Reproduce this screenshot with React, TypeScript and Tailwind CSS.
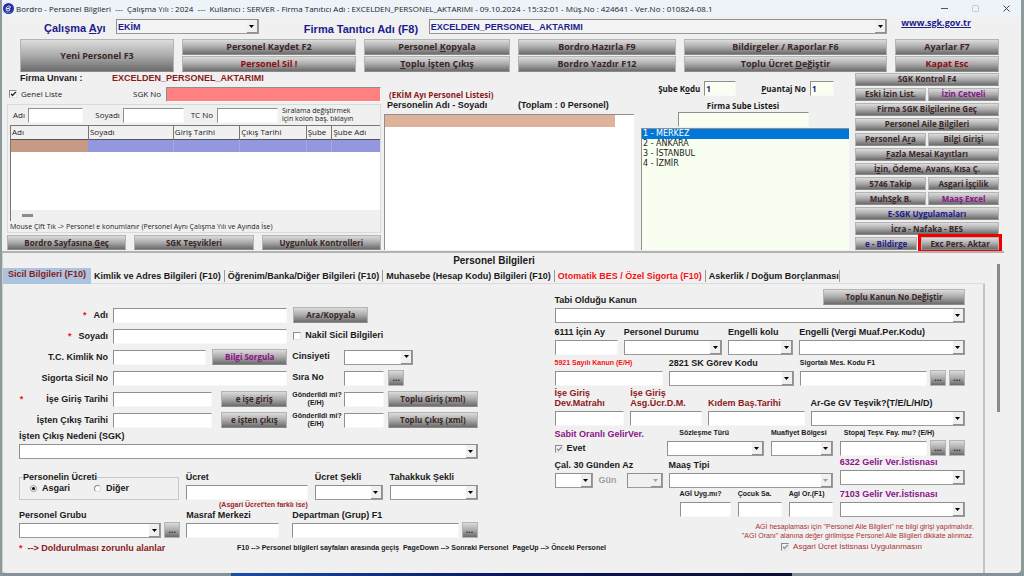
import React from 'react';
import clsx from 'clsx';

// "&" in front of a letter marks the keyboard shortcut, as in "Toplu Ücret &Değiştir"
const Mnemonic: React.FC<{ text: string }> = ({ text }) => {
    const at = text.indexOf('&');
    if (at < 0) return <span>{text}</span>;
    return (
        <span>
            {text.slice(0, at)}
            <u>{text[at + 1]}</u>
            {text.slice(at + 2)}
        </span>
    );
};

interface ButtonProps {
    text: string;
    className?: string;
}

const Button: React.FC<ButtonProps> = ({ text, className }) => (
    <button
        type="button"
        className={clsx(
            "flex min-w-0 items-center justify-center border border-[#b4b4b4] border-b-[#8a8a8a] bg-linear-to-b from-[#dcdcdc] via-[#ababab] to-[#6c6c6c] font-['Open_Sans',sans-serif] font-bold whitespace-nowrap",
            className
        )}
    >
        <Mnemonic text={text} />
    </button>
);

const MoreButton: React.FC<{ name: string }> = ({ name }) => (
    <button
        type="button"
        aria-label={name}
        className="h-4 w-4 shrink-0 border border-[#b4b4b4] bg-linear-to-b from-[#dcdcdc] via-[#ababab] to-[#6c6c6c] text-[9px] leading-[12px] font-bold text-[#3a2626]"
    >
        ...
    </button>
);

interface TextBoxProps extends React.InputHTMLAttributes<HTMLInputElement> {
    bg?: string;
}

const TextBox: React.FC<TextBoxProps> = ({ bg = 'bg-white', className = 'w-full', ...rest }) => (
    <input
        type="text"
        className={clsx(
            'h-[15px] min-w-0 border border-t-[#8f8f8f] border-r-[#f8f8f8] border-b-[#f8f8f8] border-l-[#8f8f8f] px-px font-bold text-[#1c1c8c] outline-none',
            bg,
            className
        )}
        {...rest}
    />
);

interface ComboProps {
    id?: string;
    name?: string;
    value?: string;
    disabled?: boolean;
    bg?: string;
    className?: string;
}

const Combo: React.FC<ComboProps> = ({ id, name, value = '', disabled, bg = 'bg-white', className = 'w-full' }) => (
    <span className={clsx('relative block min-w-0', className)}>
        <select
            id={id}
            aria-label={name}
            disabled={disabled}
            className={clsx(
                'block h-[15px] w-full appearance-none border border-t-[#8f8f8f] border-r-[#9a9a9a] border-b-[#9a9a9a] border-l-[#8f8f8f] px-px text-[9px] leading-[12px] font-bold text-[#1c1c8c] outline-none',
                bg
            )}
        >
            <option>{value}</option>
        </select>
        <span className="pointer-events-none absolute top-px right-px flex h-[13px] w-[11px] items-center justify-center border-r border-b border-[#8f8f8f] bg-[#f0f0f0]">
            <svg width="5" height="3" viewBox="0 0 5 3" className={disabled ? 'fill-[#a0a0a0]' : 'fill-black'}>
                <path d="M0 0h5L2.5 3z" />
            </svg>
        </span>
    </span>
);

interface FieldProps {
    label: string;
    labelClass?: string;
    className?: string;
    children: React.ReactNode;
}

const Field: React.FC<FieldProps> = ({ label, labelClass = 'text-[9px]', className, children }) => (
    <label className={clsx('flex min-w-0 flex-col justify-end', className)}>
        <span className={clsx('mb-[3px] leading-[10px] font-bold whitespace-pre', labelClass)}>{label}</span>
        {children}
    </label>
);

interface CheckProps {
    label: string;
    checked?: boolean;
    muted?: boolean;
    className?: string;
}

const Check: React.FC<CheckProps> = ({ label, checked, muted, className }) => (
    <label className={clsx('flex items-center gap-1 whitespace-nowrap', className)}>
        <span className="relative block size-2 shrink-0">
            <input
                type="checkbox"
                defaultChecked={checked}
                className={clsx(
                    'peer block size-2 appearance-none border border-t-[#8a8a8a] border-r-[#e4e4e4] border-b-[#e4e4e4] border-l-[#8a8a8a]',
                    muted ? 'bg-[#f0f0f0]' : 'bg-white'
                )}
            />
            <svg
                viewBox="0 0 8 8"
                fill="none"
                strokeWidth="1.3"
                className={clsx(
                    'pointer-events-none absolute inset-0 hidden size-2 peer-checked:block',
                    muted ? 'stroke-[#909090]' : 'stroke-[#222]'
                )}
            >
                <path d="M2 3.8l1.5 1.7L6.8 2" />
            </svg>
        </span>
        {label}
    </label>
);

const Radio: React.FC<{ label: string; checked?: boolean }> = ({ label, checked }) => (
    <label className="flex items-center gap-[5px]">
        <input
            type="radio"
            name="ucretTuru"
            defaultChecked={checked}
            className="size-[7px] appearance-none rounded-full border border-t-[#8a8a8a] border-r-[#dcdcdc] border-b-[#dcdcdc] border-l-[#8a8a8a] bg-white checked:border-[#999] checked:bg-black checked:bg-clip-content checked:p-px"
        />
        {label}
    </label>
);

const TitleBar = () => (
    <header className="flex h-[17px] items-center bg-[#eef3fa] pl-px">
        <svg viewBox="0 0 12 12" className="mr-[2px] size-[11px]">
            <circle cx="6" cy="6" r="6" fill="#25309c" />
            <path d="M1.5 8.5A5 5 0 0 0 10 9l-4 1.6z" fill="#4a8be0" />
            <path d="M3.4 5.6C4 3.4 8 2.6 8.2 4.2 8.3 5.4 5.6 6 4.2 6.2 6 6 8 6.2 7.6 7.6 7.2 9 4 9.2 3.6 7.6z" stroke="#fff" strokeWidth="1" fill="none" />
        </svg>
        <h1 className="flex-1 font-['Open_Sans',sans-serif] text-[8px] leading-[12px] whitespace-pre text-[#222]">
            {'Bordro - Personel Bilgileri  ---  Çalışma Yılı : 2024  ---  Kullanıcı : SERVER - Firma Tanıtıcı Adı : EXCELDEN_PERSONEL_AKTARIMI - 09.10.2024 - 15:32:01 - Müş.No : 424641 - Ver.No : 010824-08.1'}
        </h1>
        <div className="flex items-center gap-6 pr-[11px]">
            <button type="button" aria-label="Simge durumuna küçült">
                <svg viewBox="0 0 7 7" className="size-[7px]" stroke="#555" fill="none"><path d="M0 3.5h7" /></svg>
            </button>
            <button type="button" aria-label="Ekranı kapla" disabled>
                <svg viewBox="0 0 7 7" className="size-[7px]" stroke="#c4c8cc" fill="none"><rect x=".5" y=".5" width="6" height="6" rx="1" /></svg>
            </button>
            <button type="button" aria-label="Kapat">
                <svg viewBox="0 0 7 7" className="size-[7px]" stroke="#444" fill="none"><path d="M.5.5l6 6M6.5.5l-6 6" /></svg>
            </button>
        </div>
    </header>
);

const commandColumns = [
    [{ text: 'Personel Kaydet F2' }, { text: 'Personel Sil !', red: true }],
    [{ text: 'Personel &Kopyala' }, { text: '&Toplu İşten Çıkış' }],
    [{ text: 'Bordro Hazırla F9' }, { text: 'Bordro Yazdır F12' }],
    [{ text: 'Bildirgeler / Raporlar F6' }, { text: 'Toplu Ücret &Değiştir' }],
    [{ text: 'Ayarlar F7' }, { text: 'Kapat Esc', red: true }],
];

const CommandBar = () => (
    <div className="pr-[22px] pl-[18px]">
        <div className="flex h-[22px] items-start pt-[2px] pr-7 pl-6 text-[#1c1c8c]">
            <label htmlFor="ay" className="w-[72px] pt-0.5 text-[11px] leading-[14px] font-bold whitespace-nowrap">
                <Mnemonic text="Çalışma &Ayı" />
            </label>
            <Combo id="ay" value="EKİM" bg="bg-[#f4f4f4]" className="flex-[143]" />
            <label htmlFor="firma" className="ml-[45px] w-[125px] pt-[3px] text-[11px] leading-[14px] font-bold whitespace-nowrap">
                Firma Tanıtıcı Adı (F8)
            </label>
            <Combo id="firma" value="EXCELDEN_PERSONEL_AKTARIMI" bg="bg-[#f4f4f4]" className="flex-[459]" />
            <a href="https://www.sgk.gov.tr" className="ml-[14px] font-['Open_Sans',sans-serif] text-[9px] leading-[8px] font-bold underline">
                www.sgk.gov.tr
            </a>
        </div>
        <div className="grid grid-cols-[154fr_174fr_146fr_158fr_203fr_104fr] gap-x-2">
            <Button text="Yeni Personel F3" className="text-[9px] text-[#3a2626]" />
            {commandColumns.map((column, i) => (
                <div key={i} className="flex flex-col gap-px">
                    {column.map(b => (
                        <Button
                            key={b.text}
                            text={b.text}
                            className={clsx('h-4 text-[9px] leading-[12px]', 'red' in b ? 'text-[#8b0f0f]' : 'text-[#3a2626]')}
                        />
                    ))}
                </div>
            ))}
        </div>
    </div>
);

const PersonFilter = () => (
    <section className="flex min-w-0 flex-col">
        <p className="flex pl-[13px] text-[9px] leading-[13px] font-bold">
            <span className="w-[92px]">Firma Unvanı :</span>
            <span className="text-[#8b1a1a]">EXCELDEN_PERSONEL_AKTARIMI</span>
        </p>
        <div className="flex h-[18px] items-center pl-[2px] font-['Open_Sans',sans-serif] text-[8px]">
            <Check label="Genel Liste" checked className="w-[124px]" />
            <label className="flex min-w-0 flex-1 items-center">
                <span className="w-[33px]">SGK No</span>
                <TextBox bg="bg-[#ff8080]" className="flex-1" />
            </label>
        </div>
        <div className="mt-px flex flex-1 flex-col border border-[#dadada] pl-[2px] font-['Open_Sans',sans-serif]">
            <div className="flex h-5 items-center pl-[3px] text-[8px] leading-[12px]">
                <label className="mr-[12px] flex min-w-0 flex-[70] items-center">
                    <span className="w-[15px]">Adı</span>
                    <TextBox className="flex-1" />
                </label>
                <label className="mr-[7px] flex min-w-0 flex-[88] items-center">
                    <span className="w-7">Soyadı</span>
                    <TextBox className="flex-1" />
                </label>
                <label className="mr-[4px] flex min-w-0 flex-[87] items-center">
                    <span className="w-[26px] whitespace-nowrap">TC No</span>
                    <TextBox className="flex-1" />
                </label>
                <span className="w-[98px] text-[7px] leading-[8px] whitespace-nowrap">
                    Sıralama değiştirmek<br />için kolon baş. tıklayın
                </span>
            </div>
            <div className="flex flex-1 flex-col border-t border-l border-[#777] bg-white">
                <table className="w-full table-fixed border-collapse text-left text-[8px]">
                    <colgroup>
                        <col className="w-[21%]" />
                        <col className="w-[23%]" />
                        <col className="w-[18%]" />
                        <col className="w-[18%]" />
                        <col className="w-[7%]" />
                        <col className="w-[13%]" />
                    </colgroup>
                    <thead>
                        <tr className="h-[13px] border-b border-[#555] bg-[#f0f0f0]">
                            {['Adı', 'Soyadı', 'Giriş Tarihi', 'Çıkış Tarihi', 'Şube', 'Şube Adı'].map(h => (
                                <th key={h} className="border-r border-[#777] p-0 pl-px leading-[12px] font-normal whitespace-nowrap last:border-r-0">{h}</th>
                            ))}
                        </tr>
                    </thead>
                    <tbody>
                        <tr className="h-[13px] bg-[#9297e0]">
                            <td className="bg-[#c69a84] p-0" />
                            <td className="border-r border-[#a9a9d8] p-0" />
                            <td className="border-r border-[#a9a9d8] p-0" />
                            <td className="border-r border-[#a9a9d8] p-0" />
                            <td className="border-r border-[#a9a9d8] p-0" />
                            <td className="p-0" />
                        </tr>
                    </tbody>
                </table>
                <div className="mt-auto h-[11px] bg-[#f0f0f0] pt-1 pl-[11px]">
                    <div className="h-[3px] w-[11px] bg-[#8c8c8c]" />
                </div>
            </div>
            <p className="text-[7px] leading-[11px] whitespace-nowrap">Mouse Çift Tık -&gt; Personel e konumlanır (Personel Aynı Çalışma Yılı ve Ayında İse)</p>
        </div>
        <div className="mt-[2px] grid grid-cols-3 gap-2">
            <Button text="Bordro Sayfasına &Geç" className="h-[15px] text-[8px] text-[#3a2626]" />
            <Button text="SGK Teşvikleri" className="h-[15px] text-[8px] text-[#3a2626]" />
            <Button text="Uygunluk Kontrolleri" className="h-[15px] text-[8px] text-[#3a2626]" />
        </div>
    </section>
);

const PersonList = () => (
    <section className="flex min-w-0 flex-col pt-[17px]">
        <h2 className="pl-[5px] font-['Open_Sans',sans-serif] text-[8px] leading-[11px] font-bold text-[#8b1a1a]">(EKİM Ayı Personel Listesi)</h2>
        <p className="flex pl-[3px] text-[9px] leading-[11px] font-bold whitespace-nowrap">
            <span className="w-[131px]">Personelin Adı - Soyadı</span>
            <span>(Toplam : 0 Personel)</span>
        </p>
        <div className="mt-[3px] flex-1 border-t border-l border-[#8f8f8f] bg-white pr-[19px]">
            <div className="h-3 bg-[#dfb29b]" />
        </div>
    </section>
);

const branches = ['1 - MERKEZ', '2 - ANKARA', '3 - İSTANBUL', '4 - İZMİR'];

const BranchList = () => (
    <section className="flex min-w-0 flex-col pt-[9px] pl-1">
        <div className="flex justify-end pr-[15px] font-['Open_Sans',sans-serif] text-[8px] font-bold">
            <label className="flex items-center gap-1 whitespace-nowrap">
                <Mnemonic text="Şube K&odu" />
                <TextBox bg="bg-[#f8fff0]" className="w-8" defaultValue="1" />
            </label>
            <label className="ml-[25px] flex items-center gap-1 whitespace-nowrap">
                <Mnemonic text="&Puantaj No" />
                <TextBox bg="bg-[#f8fff0]" className="w-6" defaultValue="1" />
            </label>
        </div>
        <label className="mt-1 flex flex-col items-center pr-1">
            <span className="font-['Open_Sans',sans-serif] text-[8px] leading-[12px] font-bold">Firma Sube Listesi</span>
            <TextBox bg="bg-[#f8fff0]" className="w-[131px]" />
        </label>
        <ul role="listbox" aria-label="Firma Sube Listesi" className="mt-px flex-1 border-t border-l border-[#8f8f8f] bg-[#f8fff0] font-['DejaVu_Sans',sans-serif] text-[8px] leading-[10px] text-[#222]">
            {branches.map((b, i) => (
                <li key={b} role="option" aria-selected={i === 0} className={clsx('pl-px', i === 0 && 'bg-[#0078d7] text-white')}>{b}</li>
            ))}
        </ul>
    </section>
);

const sideRows = [
    ['SGK Kontrol F4'],
    ['Eski İzin List.', 'İzin Cetveli'],
    ['Firma SGK Bilgilerine Geç'],
    ['Personel Aile &Bilgileri'],
    ['Personel A&ra', 'Bilgi Girişi'],
    ['&Fazla Mesai Kayıtları'],
    ['İ&zin, Ödeme, Avans, Kısa Ç.'],
    ['5746 Takip', 'Asgari İşçilik'],
    ['MuhSgk B.', 'Maaş Excel'],
    ['E-SGK Uygulamaları'],
    ['İcra - Nafaka - BES'],
];

const sideColor = (text: string) => {
    if (text === 'İzin Cetveli' || text === 'Maaş Excel') return 'text-[#8a128a]';
    if (text === 'E-SGK Uygulamaları') return 'text-[#1c1c8c]';
    return 'text-[#3a2626]';
};

const SideMenu = () => (
    <nav className="flex min-w-0 flex-col gap-[2px] pt-px pl-[3px]">
        {sideRows.map(row => (
            <div key={row[0]} className="flex flex-1 gap-[2px]">
                {row.map(text => (
                    <Button key={text} text={text} className={clsx('flex-1 text-[8px] leading-[10px]', sideColor(text))} />
                ))}
            </div>
        ))}
        <div className="flex flex-1 gap-[4px]">
            <Button text="e - Bildirge" className="flex-[62] text-[8px] leading-[10px] text-[#1c1c8c]" />
            <Button text="Exc Pers. Aktar" className="flex-[78] text-[8px] leading-[10px] text-[#3a2626] outline-3 outline-[#f20000]" />
        </div>
    </nav>
);

const tabs = [
    'Kimlik ve Adres Bilgileri (F10)',
    'Öğrenim/Banka/Diğer Bilgileri (F10)',
    'Muhasebe (Hesap Kodu) Bilgileri (F10)',
    'Otomatik BES / Özel Sigorta (F10)',
    'Askerlik / Doğum Borçlanması',
];

const TabBar = () => (
    <div role="tablist" className="flex h-4 items-center border-b border-[#dcdcdc] text-[9px] font-bold whitespace-nowrap">
        <button role="tab" aria-selected="true" className="h-4 w-[88px] bg-[#aac3de] pb-1 pl-[5px] text-left leading-[12px] text-[#8b1a1a]">
            Sicil Bilgileri (F10)
        </button>
        {tabs.map(t => (
            <button
                key={t}
                role="tab"
                aria-selected="false"
                className={clsx('h-3 border-r border-[#999] pr-[3px] pl-[3px] leading-[12px] last:pr-0', t.startsWith('Otomatik') && 'text-[#f41414]')}
            >
                {t}
            </button>
        ))}
    </div>
);

interface RowLabelProps {
    htmlFor: string;
    text: string;
    star?: string;
}

const RowLabel: React.FC<RowLabelProps> = ({ htmlFor, text, star }) => (
    <label htmlFor={htmlFor} className="flex justify-end text-right text-[9px] leading-[10px] font-bold whitespace-nowrap">
        {star && <span className={clsx('text-[#f41414]', star)}>*</span>}
        {text}
    </label>
);

const IdentityForm = () => (
    <div className="min-w-0 pt-[23px]">
        <div className="grid auto-rows-[16px] grid-cols-[89px_174fr_47px_133fr] items-center gap-x-[5px] gap-y-[5px] text-[9px] font-bold">
            <RowLabel htmlFor="adi" text="Adı" star="mr-[7px]" />
            <TextBox id="adi" />
            <div className="col-span-2 pl-px">
                <Button text="Ara/Kopyala" className="h-4 w-[75px] text-[8px] text-[#3a2626]" />
            </div>

            <RowLabel htmlFor="soyadi" text="Soyadı" star="mr-[7px]" />
            <TextBox id="soyadi" />
            <Check label="Nakil Sicil Bilgileri" className="col-span-2 pl-px" />

            <RowLabel htmlFor="tc" text="T.C. Kimlik No" />
            <div className="flex min-w-0 items-center gap-[6px]">
                <TextBox id="tc" className="flex-1" />
                <Button text="Bilgi Sorgula" className="h-4 w-[75px] text-[8px] text-[#8a128a]" />
            </div>
            <label htmlFor="cinsiyet">Cinsiyeti</label>
            <Combo id="cinsiyet" className="w-[69px]" />

            <RowLabel htmlFor="sicil" text="Sigorta Sicil No" />
            <TextBox id="sicil" />
            <label htmlFor="sira">Sıra No</label>
            <div className="flex min-w-0 items-center gap-[4px]">
                <TextBox id="sira" className="w-10" />
                <MoreButton name="Sıra No seç" />
            </div>

            <RowLabel htmlFor="giris" text="İşe Giriş Tarihi" star="mr-[23px]" />
            <div className="flex min-w-0 items-center gap-[9px]">
                <TextBox id="giris" className="flex-1" />
                <Button text="e işe giriş" className="h-4 w-[66px] text-[8px] text-[#3a2626]" />
            </div>
            <label htmlFor="girisEH" className="text-center text-[7px] leading-[8px] whitespace-nowrap">Gönderildi mi?<br />(E/H)</label>
            <div className="flex min-w-0 items-center gap-[4px]">
                <TextBox id="girisEH" className="w-10" />
                <Button text="Toplu Giriş (xml)" className="h-4 flex-1 text-[8px] text-[#3a2626]" />
            </div>

            <RowLabel htmlFor="cikis" text="İşten Çıkış Tarihi" />
            <div className="flex min-w-0 items-center gap-[9px]">
                <TextBox id="cikis" className="flex-1" />
                <Button text="e işten çıkış" className="h-4 w-[66px] text-[8px] text-[#3a2626]" />
            </div>
            <label htmlFor="cikisEH" className="text-center text-[7px] leading-[8px] whitespace-nowrap">Gönderildi mi?<br />(E/H)</label>
            <div className="flex min-w-0 items-center gap-[4px]">
                <TextBox id="cikisEH" className="w-10" />
                <Button text="Toplu Çıkış (xml)" className="h-4 flex-1 text-[8px] text-[#3a2626]" />
            </div>
        </div>

        <Field label="İşten Çıkış Nedeni (SGK)" className="mt-[3px]">
            <Combo />
        </Field>

        <div className="mt-[11px] grid grid-cols-[160fr_122fr_68fr_88fr] gap-x-[7px]">
            <fieldset className="mt-0.5 h-[28px] min-w-0 border border-[#c8c8c8] pl-[10px] text-[9px] leading-[10px] font-bold">
                <legend className="-ml-[7px] bg-[#f0f0f0] leading-[10px]">Personelin Ücreti</legend>
                <div className="flex gap-6 pt-px">
                    <Radio label="Asgari" checked />
                    <Radio label="Diğer" />
                </div>
            </fieldset>
            <Field label="Ücret"><TextBox /></Field>
            <Field label="Ücret Şekli"><Combo /></Field>
            <Field label="Tahakkuk Şekli"><Combo /></Field>
        </div>
        <p className="pl-[200px] text-[7px] leading-[10px] font-bold text-[#a02828]">(Asgari Ücret'ten farklı ise)</p>
        <div className="flex items-end">
            <Field label="Personel Grubu" className="mr-[3px] flex-[142]"><Combo /></Field>
            <MoreButton name="Personel Grubu seç" />
            <Field label="Masraf Merkezi" className="mr-[13px] ml-[6px] flex-[93]"><TextBox /></Field>
            <Field label="Departman (Grup) F1" className="mr-[3px] flex-[166]"><TextBox /></Field>
            <MoreButton name="Departman seç" />
        </div>
    </div>
);

const LawForm = () => (
    <div>
        <div className="pt-[5px] pr-[9px]">
            <div className="grid grid-cols-[1fr_142px]">
                <label htmlFor="kanun" className="self-end text-[9px] leading-[10px] font-bold">Tabi Olduğu Kanun</label>
                <Button text="Toplu Kanun No Değiştir" className="h-4 text-[8px] text-[#3a2626]" />
            </div>
            <div className="mt-[3px]"><Combo id="kanun" /></div>

            <div className="mt-1 grid grid-cols-[63fr_98fr_65fr_165fr] gap-x-[6px]">
                <Field label="6111 İçin Ay"><TextBox /></Field>
                <Field label="Personel Durumu"><Combo /></Field>
                <Field label="Engelli kolu"><Combo /></Field>
                <Field label="Engelli (Vergi Muaf.Per.Kodu)"><Combo /></Field>
            </div>

            <div className="mt-[3px] grid grid-cols-[108fr_125fr_165fr] gap-x-[6px]">
                <Field label="5921 Sayılı Kanun (E/H)" labelClass="text-[7px] text-[#f41414]"><TextBox /></Field>
                <Field label="2821 SK Görev Kodu"><Combo /></Field>
                <div className="flex min-w-0 items-end gap-[3px]">
                    <Field label="Sigortalı Mes. Kodu F1" labelClass="text-[7px]" className="flex-1"><TextBox /></Field>
                    <MoreButton name="Meslek kodu seç" />
                    <MoreButton name="Meslek kodu ara" />
                </div>
            </div>

            <div className="mt-[2px] grid grid-cols-[70fr_72fr_97fr_155fr] gap-x-[6px]">
                <Field label={'İşe Giriş\nDev.Matrahı'} labelClass="text-[9px] text-[#8b1a1a]"><TextBox /></Field>
                <Field label={'İşe Giriş\nAsg.Ücr.D.M.'} labelClass="text-[9px] text-[#8b1a1a]"><TextBox /></Field>
                <Field label="Kıdem Baş.Tarihi" labelClass="text-[9px] text-[#8b1a1a]"><TextBox /></Field>
                <Field label="Ar-Ge GV Teşvik?(T/E/L/H/D)"><Combo /></Field>
            </div>

            <div className="mt-[2px] grid grid-cols-[278fr_125fr] gap-x-[7px]">
                <div className="min-w-0">
                    <div className="grid grid-cols-[106fr_97fr_62fr] gap-x-[7px]">
                        <div className="min-w-0 text-[9px] font-bold">
                            <p className="leading-[13px] whitespace-nowrap text-[#8a128a]">Sabit Oranlı GelirVer.</p>
                            <Check label="Evet" checked muted className="leading-[15px]" />
                        </div>
                        <Field label="Sözleşme Türü" labelClass="pl-3 text-[7px]"><Combo /></Field>
                        <Field label="Muafiyet Bölgesi" labelClass="text-[7px]"><Combo /></Field>
                    </div>
                    <div className="mt-1 grid grid-cols-[38fr_30px_36fr_168fr] items-end gap-x-[2px]">
                        <Field label="Çal. 30 Günden Az"><Combo /></Field>
                        <span className="pl-1 text-[9px] leading-[15px] font-bold text-[#a0a0a0]">Gün</span>
                        <Combo name="Gün" disabled bg="bg-[#f0f0f0]" />
                        <Field label="Maaş Tipi" className="pl-[4px]"><Combo disabled /></Field>
                    </div>
                    <div className="mt-px grid grid-cols-[51fr_44fr_44fr] gap-x-[7px] pl-[125px]">
                        <Field label="AGİ Uyg.mı?" labelClass="text-[7px]"><TextBox /></Field>
                        <Field label="Çocuk Sa." labelClass="text-[7px]"><TextBox /></Field>
                        <Field label="Agi Or.(F1)" labelClass="text-[7px]"><TextBox /></Field>
                    </div>
                </div>
                <div className="min-w-0">
                    <div className="flex min-w-0 items-end gap-[3px]">
                        <Field label="Stopaj Teşv. Fay. mu? (E/H)" labelClass="pl-1 text-[7px]" className="flex-1"><TextBox /></Field>
                        <MoreButton name="Stopaj seç" />
                        <MoreButton name="Stopaj ara" />
                    </div>
                    <Field label="6322 Gelir Ver.İstisnası" labelClass="text-[9px] text-[#8a128a]" className="mt-px"><Combo /></Field>
                    <Field label="7103 Gelir Ver.İstisnası" labelClass="text-[9px] text-[#8a128a]" className="mt-1"><Combo /></Field>
                </div>
            </div>
        </div>
        <p className="mt-[5px] text-right text-[7px] leading-[9px] whitespace-nowrap text-[#a83434]">
            AGİ hesaplaması için "Personel Aile Bilgileri" ne bilgi girişi yapılmalıdır.<br />
            "AGİ Oranı" alanına değer girilmişse Personel Aile Bilgileri dikkate alınmaz.
        </p>
        <Check label="Asgari Ücret İstisnası Uygulanmasın" checked muted className="mt-px justify-end pr-[52px] text-[8px] leading-[12px] text-[#a83434]" />
    </div>
);

const App: React.FC = () => (
    <div className="flex min-h-screen flex-col bg-[#8d9a9b] pr-[3px] pl-[2px] font-['Liberation_Sans',Arial,sans-serif] text-[#1a1a1a]">
        <main className="flex flex-1 flex-col rounded-b-sm bg-[#f0f0f0]">
            <TitleBar />
            <CommandBar />
            <div className="grid h-[178px] grid-cols-[374fr_250fr_212fr_147fr] gap-x-[3px] pr-[22px] pl-[5px]">
                <PersonFilter />
                <PersonList />
                <BranchList />
                <SideMenu />
            </div>
            <div className="mt-px mr-[17px] h-[2px] bg-[#b2b2b2]" />
            <div className="flex flex-1">
                <section className="flex min-w-0 flex-1 flex-col border-l border-[#d0d0d0]">
                    <h2 className="h-[15px] text-center text-[10px] leading-[16px] font-bold">Personel Bilgileri</h2>
                    <TabBar />
                    <div className="flex-1 border-r-2 border-[#c4c4c4] pr-[9px] pl-4">
                        <div className="grid grid-cols-[458fr_419fr] gap-x-[77px]">
                            <IdentityForm />
                            <div className="row-span-2 min-w-0">
                                <LawForm />
                            </div>
                            <div className="flex min-w-0 items-start pt-1 text-[7px] leading-[12px] font-bold whitespace-nowrap">
                                <p className="flex w-[218px] shrink-0 gap-[5px] text-[9px] text-[#8b1a1a]">
                                    <span className="text-[#f41414]">*</span>--&gt; Doldurulması zorunlu alanlar
                                </p>
                                <p className="whitespace-pre">{'F10 --> Personel bilgileri sayfaları arasında geçiş  PageDown --> Sonraki Personel  PageUp --> Önceki Personel'}</p>
                            </div>
                        </div>
                    </div>
                </section>
                <div className="w-[36px] pt-[11px] pl-3">
                    <div className="h-[148px] w-[3px] bg-[#8a8a8a]" />
                </div>
            </div>
        </main>
        <div className="flex h-[3px] justify-center bg-[#84909a]">
            <div className="w-[55%] bg-linear-to-r from-[#1c4fa8] via-[#0a1460] to-[#0c1030]" />
        </div>
    </div>
);

export default App;
